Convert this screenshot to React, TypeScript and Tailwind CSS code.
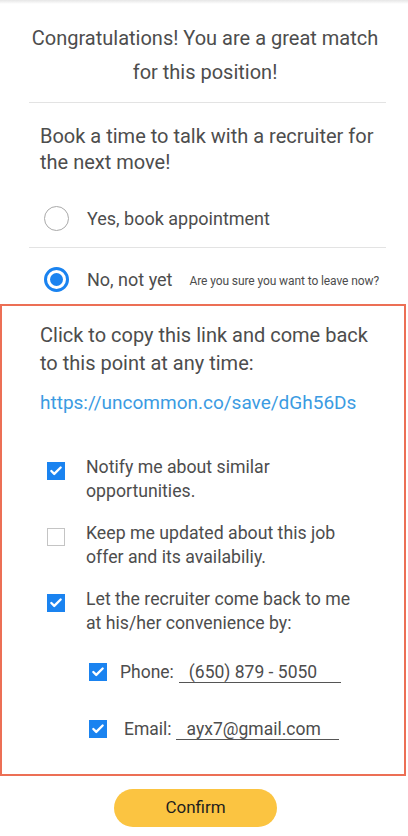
import { Check } from "lucide-react";

const options = [
  { label: "Notify me about similar", label2: "opportunities.", checked: true },
  { label: "Keep me updated about this job", label2: "offer and its availabiliy.", checked: false },
  { label: "Let the recruiter come back to me", label2: "at his/her convenience by:", checked: true },
];

function Box({ checked }: { checked: boolean }) {
  return checked ? (
    <div className="w-[18px] h-[18px] bg-[#1a83f0] flex items-center justify-center shrink-0">
      <Check className="w-[14px] h-[14px] text-white" strokeWidth={4} />
    </div>
  ) : (
    <div className="w-[18px] h-[18px] border border-[#c4c4c4] bg-white shrink-0"></div>
  );
}

export default function App() {
  return (
    <main className="w-[408px] h-[836px] bg-white text-[#4d4d4d] font-['Roboto',sans-serif] overflow-hidden">
      {/* top shadow */}
      <div className="h-[4px] bg-gradient-to-b from-[#e6e6e6] to-white"></div>

      {/* HEADER */}
      <h1 className="pt-[17px] text-center text-[20px] leading-[34px] pl-[2px]">
        Congratulations! You are a great match
        <br />
        for this position!
      </h1>

      <div className="mt-[13px] ml-[29px] mr-[22px] h-px bg-[#e3e3e3]"></div>

      {/* BOOK */}
      <p className="mt-[20px] pl-[40px] text-[20px] leading-[26px]">
        Book a time to talk with a recruiter for
        <br />
        the next move!
      </p>

      <div className="mt-[27px] flex items-center h-[32px] pl-[44px]">
        <div className="w-[25px] h-[25px] rounded-full border border-[#a9a9a9]"></div>
        <span className="ml-[18px] text-[18px]">Yes, book appointment</span>
      </div>

      <div className="mt-[13px] ml-[29px] mr-[22px] h-px bg-[#e3e3e3]"></div>

      <div className="mt-[15px] flex items-center h-[32px] pl-[44px]">
        <div className="w-[25px] h-[25px] rounded-full border-[3px] border-[#1a83f0] flex items-center justify-center">
          <div className="w-[13px] h-[13px] rounded-full bg-[#1a83f0]"></div>
        </div>
        <span className="ml-[18px] text-[18px]">No, not yet</span>
        <span className="ml-[17px] text-[12px] mt-[3px] tracking-[-0.1px]">Are you sure you want to leave now?</span>
      </div>

      {/* SAVE BOX */}
      <section className="mt-[9px] h-[472px] border-2 border-[#ec6f55] mr-[2px]">
        <p className="mt-[15px] pl-[38px] text-[20px] leading-[28px]">
          Click to copy this link and come back
          <br />
          to this point at any time:
        </p>
        <p className="mt-[12px] pl-[38px] text-[19px] leading-[28px] text-[#3b9be2]">
          https://uncommon.co/save/dGh56Ds
        </p>

        <div className="mt-[38px] flex flex-col gap-[18px]">
          {options.map((o) => (
            <div key={o.label} className="flex pl-[45px]">
              <div className="pt-[7px]">
                <Box checked={o.checked} />
              </div>
              <p className="ml-[21px] text-[17.7px] leading-[24px]">
                {o.label}
                <br />
                {o.label2}
              </p>
            </div>
          ))}
        </div>

        <div className="mt-[25px] flex items-center pl-[87px] h-[24px]">
          <Box checked />
          <span className="ml-[13px] text-[17.5px]">Phone:</span>
          <span className="ml-[5px] w-[162px] border-b border-[#555] pl-[10px] text-[17.5px] leading-[20px]">
            (650) 879 - 5050
          </span>
        </div>

        <div className="mt-[33px] flex items-center pl-[87px] h-[24px]">
          <Box checked />
          <span className="ml-[17px] text-[17.5px]">Email:</span>
          <span className="ml-[4px] w-[163px] border-b border-[#555] pl-[11px] text-[17.5px] leading-[20px]">
            ayx7@gmail.com
          </span>
        </div>
      </section>

      {/* CONFIRM */}
      <div className="mt-[13px] pl-[114px]">
        <button className="w-[163px] h-[38px] rounded-full bg-[#fbc441] text-[17px] text-[#1e1e1e]">
          Confirm
        </button>
      </div>
    </main>
  );
}
